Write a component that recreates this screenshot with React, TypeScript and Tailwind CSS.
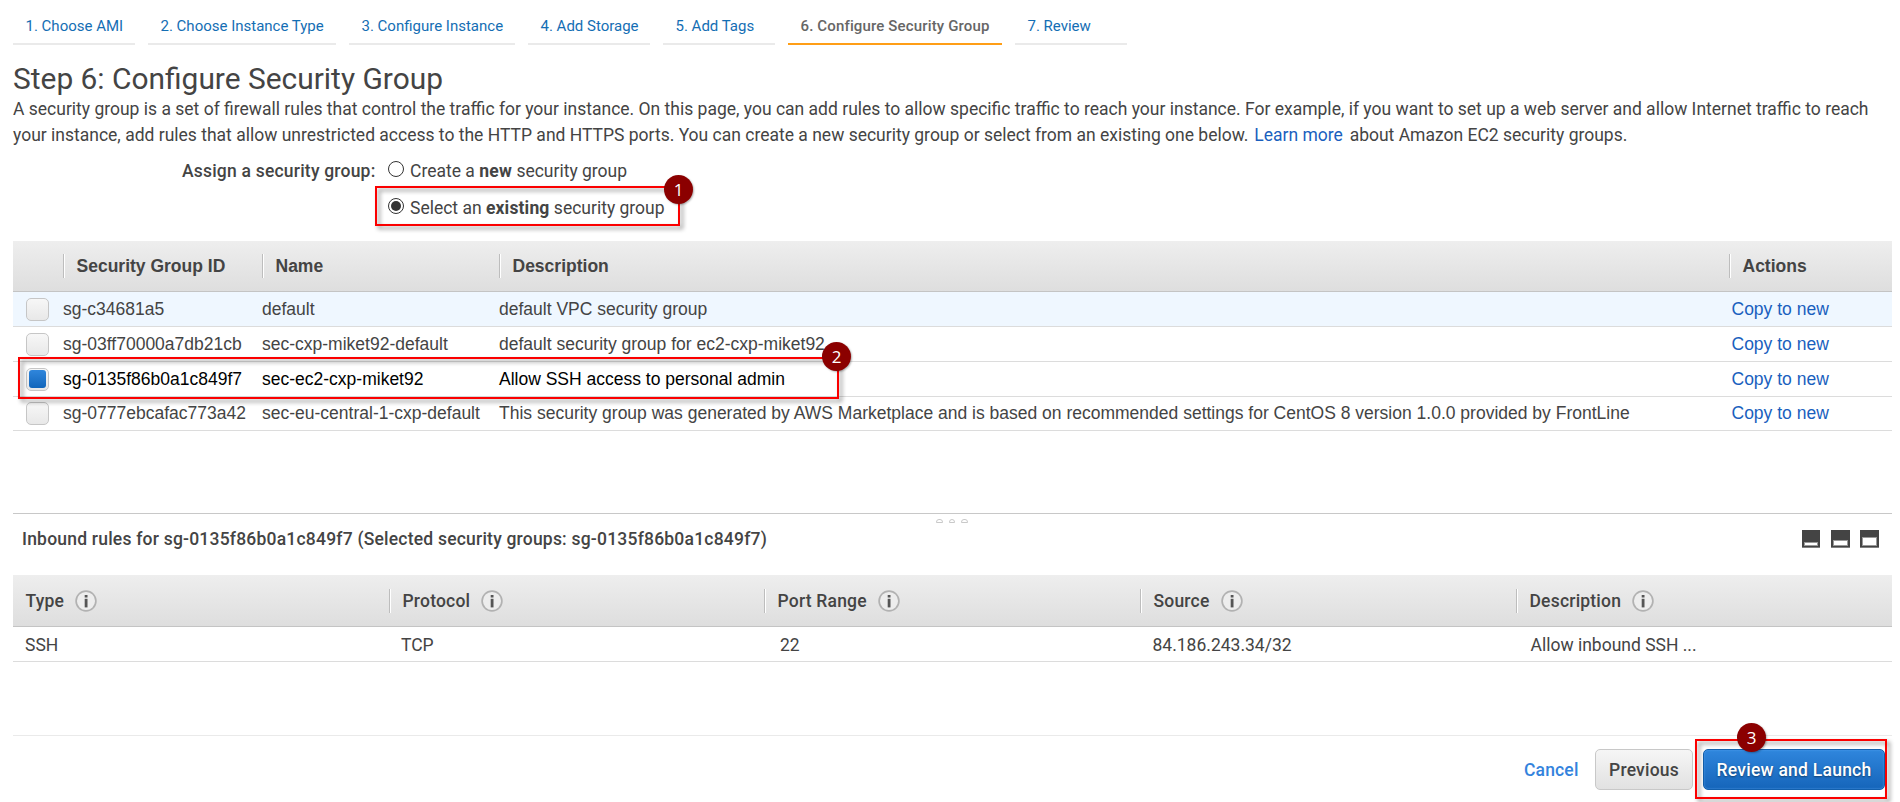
import type { ReactNode } from "react";

const steps = [
  { label: "1. Choose AMI", width: "w-[122px]" },
  { label: "2. Choose Instance Type", width: "w-[188px]" },
  { label: "3. Configure Instance", width: "w-[166px]" },
  { label: "4. Add Storage", width: "w-[122px]" },
  { label: "5. Add Tags", width: "w-[112px]" },
  { label: "6. Configure Security Group", width: "w-[214px]", active: true },
  { label: "7. Review", width: "w-[112px]" },
];

const groups = [
  { id: "sg-c34681a5", name: "default", description: "default VPC security group", row: "h-[35px] bg-[#eff7ff]" },
  { id: "sg-03ff70000a7db21cb", name: "sec-cxp-miket92-default", description: "default security group for ec2-cxp-miket92", row: "h-[35px]" },
  { id: "sg-0135f86b0a1c849f7", name: "sec-ec2-cxp-miket92", description: "Allow SSH access to personal admin", row: "h-[35px] text-black", checked: true },
  { id: "sg-0777ebcafac773a42", name: "sec-eu-central-1-cxp-default", description: "This security group was generated by AWS Marketplace and is based on recommended settings for CentOS 8 version 1.0.0 provided by FrontLine", row: "h-[34px] leading-[25px] pb-px" },
];

const rules = [
  { title: "Type", value: "SSH", pad: "pl-[12px]" },
  { title: "Protocol", value: "TCP", pad: "pl-[12px]" },
  { title: "Port Range", value: "22", pad: "pl-[16px]" },
  { title: "Source", value: "84.186.243.34/32", pad: "pl-[12.5px]" },
  { title: "Description", value: "Allow inbound SSH ...", pad: "pl-[14.5px]" },
];

const groupGrid = "grid grid-cols-[50px_199px_237px_1230px_163px]";
const ruleGrid = "grid grid-cols-[376px_375px_376px_376px_376px]";
const headerBar = "border-b border-[#c4c4c4] bg-linear-to-b from-[#eeeeee] to-[#dedede]";

function Separator() {
  return <span className="h-6 w-[2px] shrink-0 border-l border-[#bdbdbd] bg-white" />;
}

function Radio({ checked }: { checked?: boolean }) {
  return (
    <span className="flex size-4 shrink-0 items-center justify-center rounded-full border border-[#333] bg-white">
      {checked && <span className="size-[10px] rounded-full bg-[#333]" />}
    </span>
  );
}

function Checkbox({ checked }: { checked?: boolean }) {
  return (
    <span className="flex size-[23px] items-center justify-center rounded-[5px] border border-[#c6c6c6] bg-linear-to-b from-[#f7f7f7] to-[#e8e8e8]">
      {checked && <span className="h-[18px] w-[17px] rounded-[3px] bg-linear-to-b from-[#2f86dc] to-[#1166bb]" />}
    </span>
  );
}

function InfoIcon() {
  return (
    <svg width="22" height="22" viewBox="0 0 22 22" className="ml-[11px]">
      <circle cx="11" cy="11" r="9.9" fill="#ededed" stroke="#b2b2b2" strokeWidth="1.7" />
      <rect x="9.7" y="5" width="2.8" height="2.5" fill="#555" />
      <rect x="9.7" y="8.8" width="2.8" height="8.6" fill="#555" />
    </svg>
  );
}

function PaneIcon({ top, width }: { top: number; width: number }) {
  return (
    <svg width={width} height="18" shapeRendering="crispEdges">
      <rect width={width} height="18" fill="#444" />
      <rect y="17" width={width} height="1" fill="#808080" />
      <rect x="2" y={top - 1} width={width - 4} height={17 - top} fill="#999" />
      <rect x="3" y={top} width={width - 6} height={15 - top} fill="#fff" />
    </svg>
  );
}

function Frame({ place }: { place: string }) {
  return (
    <div className={`pointer-events-none absolute border-2 border-[#fb0000] drop-shadow-[3px_3px_2px_rgba(0,0,0,0.45)] ${place}`} />
  );
}

function Badge({ place, children }: { place: string; children: ReactNode }) {
  return (
    <div className={`absolute flex size-[29px] items-center justify-center rounded-full bg-[#8b0000] font-['Open_Sans',sans-serif] text-[17px] leading-none text-white shadow-[1px_1px_2px_rgba(0,0,0,0.3)] ${place}`}>
      {children}
    </div>
  );
}

export default function App() {
  return (
    <div className="relative flex h-[802px] w-[1900px] flex-col overflow-hidden bg-white pr-2 pl-[13px] font-[Roboto,sans-serif] text-[17.5px] leading-[26px] text-[#444]">
      <nav className="flex gap-[13px] pt-4 text-[15px] leading-5">
        {steps.map((s) => (
          <div
            key={s.label}
            className={`h-[29px] border-b-2 pl-[12.5px] whitespace-nowrap ${s.width} ${
              s.active
                ? "border-[#ff9e16] font-medium tracking-[0.145px] text-[#666]"
                : "border-[#eaeaea] text-[#146eb4]"
            }`}
          >
            {s.label}
          </div>
        ))}
      </nav>

      <h1 className="mt-4 text-[29.9px] leading-[35px]">Step 6: Configure Security Group</h1>
      <p className="w-[1875px]">
        A security group is a set of firewall rules that control the traffic for your instance. On this page, you can add rules to allow
        specific traffic to reach your instance. For example, if you want to set up a web server and allow Internet traffic to reach
        <br />
        your instance, add rules that allow unrestricted access to the HTTP and HTTPS ports. You can create a new security group or
        select from an existing one below. <a className="mr-[2.5px] ml-[1.5px] text-[#1a5fbe]">Learn more</a> about Amazon EC2 security groups.
      </p>

      <div className="mt-[10px] flex">
        <div className="w-[362.5px] text-right font-medium tracking-[0.21px]">Assign a security group:</div>
        <div className="ml-[12.5px] flex flex-col gap-[11px]">
          <label className="flex gap-[6px]">
            <span className="mt-[3px]"><Radio /></span>
            <span>Create a <b className="font-bold tracking-[0.25px]">new</b> security group</span>
          </label>
          <label className="flex gap-[6px]">
            <span className="mt-[3px]"><Radio checked /></span>
            <span>Select an <b className="font-bold tracking-[0.15px]">existing</b> security group</span>
          </label>
        </div>
      </div>

      <section className="mt-5 font-['Liberation_Sans',sans-serif]">
        <div className={`h-[51px] items-center font-bold ${groupGrid} ${headerBar}`}>
          <span />
          {["Security Group ID", "Name", "Description", "Actions"].map((h) => (
            <div key={h} className="flex items-center gap-[11.5px]">
              <Separator />
              <span>{h}</span>
            </div>
          ))}
        </div>
        {groups.map((g) => (
          <div key={g.id} className={`items-center border-b border-[#dcdcdc] whitespace-nowrap ${groupGrid} ${g.row}`}>
            <span className="pl-[13px]"><Checkbox checked={g.checked} /></span>
            <span>{g.id}</span>
            <span>{g.name}</span>
            <span>{g.description}</span>
            <a className="pl-[2.5px] text-[#1a5fbe]">Copy to new</a>
          </div>
        ))}
      </section>

      <section className="mt-[82px] border-t border-[#c8c8c8]">
        <div className="flex h-[61px] items-start justify-between pt-[12px] pr-[13px] pl-[9px]">
          <h2 className="font-medium tracking-[0.21px]">Inbound rules for sg-0135f86b0a1c849f7 (Selected security groups: sg-0135f86b0a1c849f7)</h2>
          <div className="mt-1 flex gap-[10.5px]">
            <PaneIcon top={13} width={18} />
            <PaneIcon top={11} width={19} />
            <PaneIcon top={8} width={19} />
          </div>
        </div>
        <div className={`h-[52px] items-center font-medium tracking-[0.2px] ${ruleGrid} ${headerBar}`}>
          {rules.map((r, i) => (
            <div key={r.title} className="flex items-center">
              {i > 0 && <Separator />}
              <span className={i > 0 ? "pl-[11.5px]" : "pl-[12.5px]"}>{r.title}</span>
              <InfoIcon />
            </div>
          ))}
        </div>
        <div className={`h-[35px] items-center border-b border-[#dcdcdc] pt-[2px] ${ruleGrid}`}>
          {rules.map((r) => (
            <span key={r.title} className={r.pad}>{r.value}</span>
          ))}
        </div>
      </section>

      <footer className="mt-[73px] flex items-start border-t border-[#eaeaea] pt-[13px] pr-[7px] font-medium">
        <a className="mt-2 mr-[16.5px] ml-auto tracking-[0.15px] text-[#3383dd]">Cancel</a>
        <button className="mr-[10px] flex h-[41px] w-[98px] items-center justify-center rounded-[5px] border border-[#c8c8c8] bg-linear-to-b from-[#f6f6f6] to-[#e1e1e1] tracking-[0.2px]">
          Previous
        </button>
        <button className="flex h-[41px] w-[182px] items-center justify-center rounded-[5px] border border-[#1360ad] bg-linear-to-b from-[#2f86dd] to-[#1565ba] tracking-[0.25px] text-white shadow-[inset_0_0_2px_#5aa5ee] [text-shadow:0_1px_2px_rgba(0,0,0,0.45)]">
          Review and Launch
        </button>
      </footer>

      <div className="absolute top-[519px] left-[936px] flex gap-[6px]">
        {[0, 1, 2].map((i) => (
          <span key={i} className="h-[4px] w-[6.5px] rounded-t-[3px] border border-[#c9c9c9]" />
        ))}
      </div>

      <Frame place="top-[186px] left-[375px] h-[40px] w-[305px]" />
      <Badge place="top-[175px] left-[664px]">1</Badge>
      <Frame place="top-[357px] left-[18px] h-[42px] w-[821px]" />
      <Badge place="top-[342px] left-[822px]">2</Badge>
      <Frame place="top-[739px] left-[1695px] h-[60px] w-[192px]" />
      <Badge place="top-[723px] left-[1737px]">3</Badge>
    </div>
  );
}
